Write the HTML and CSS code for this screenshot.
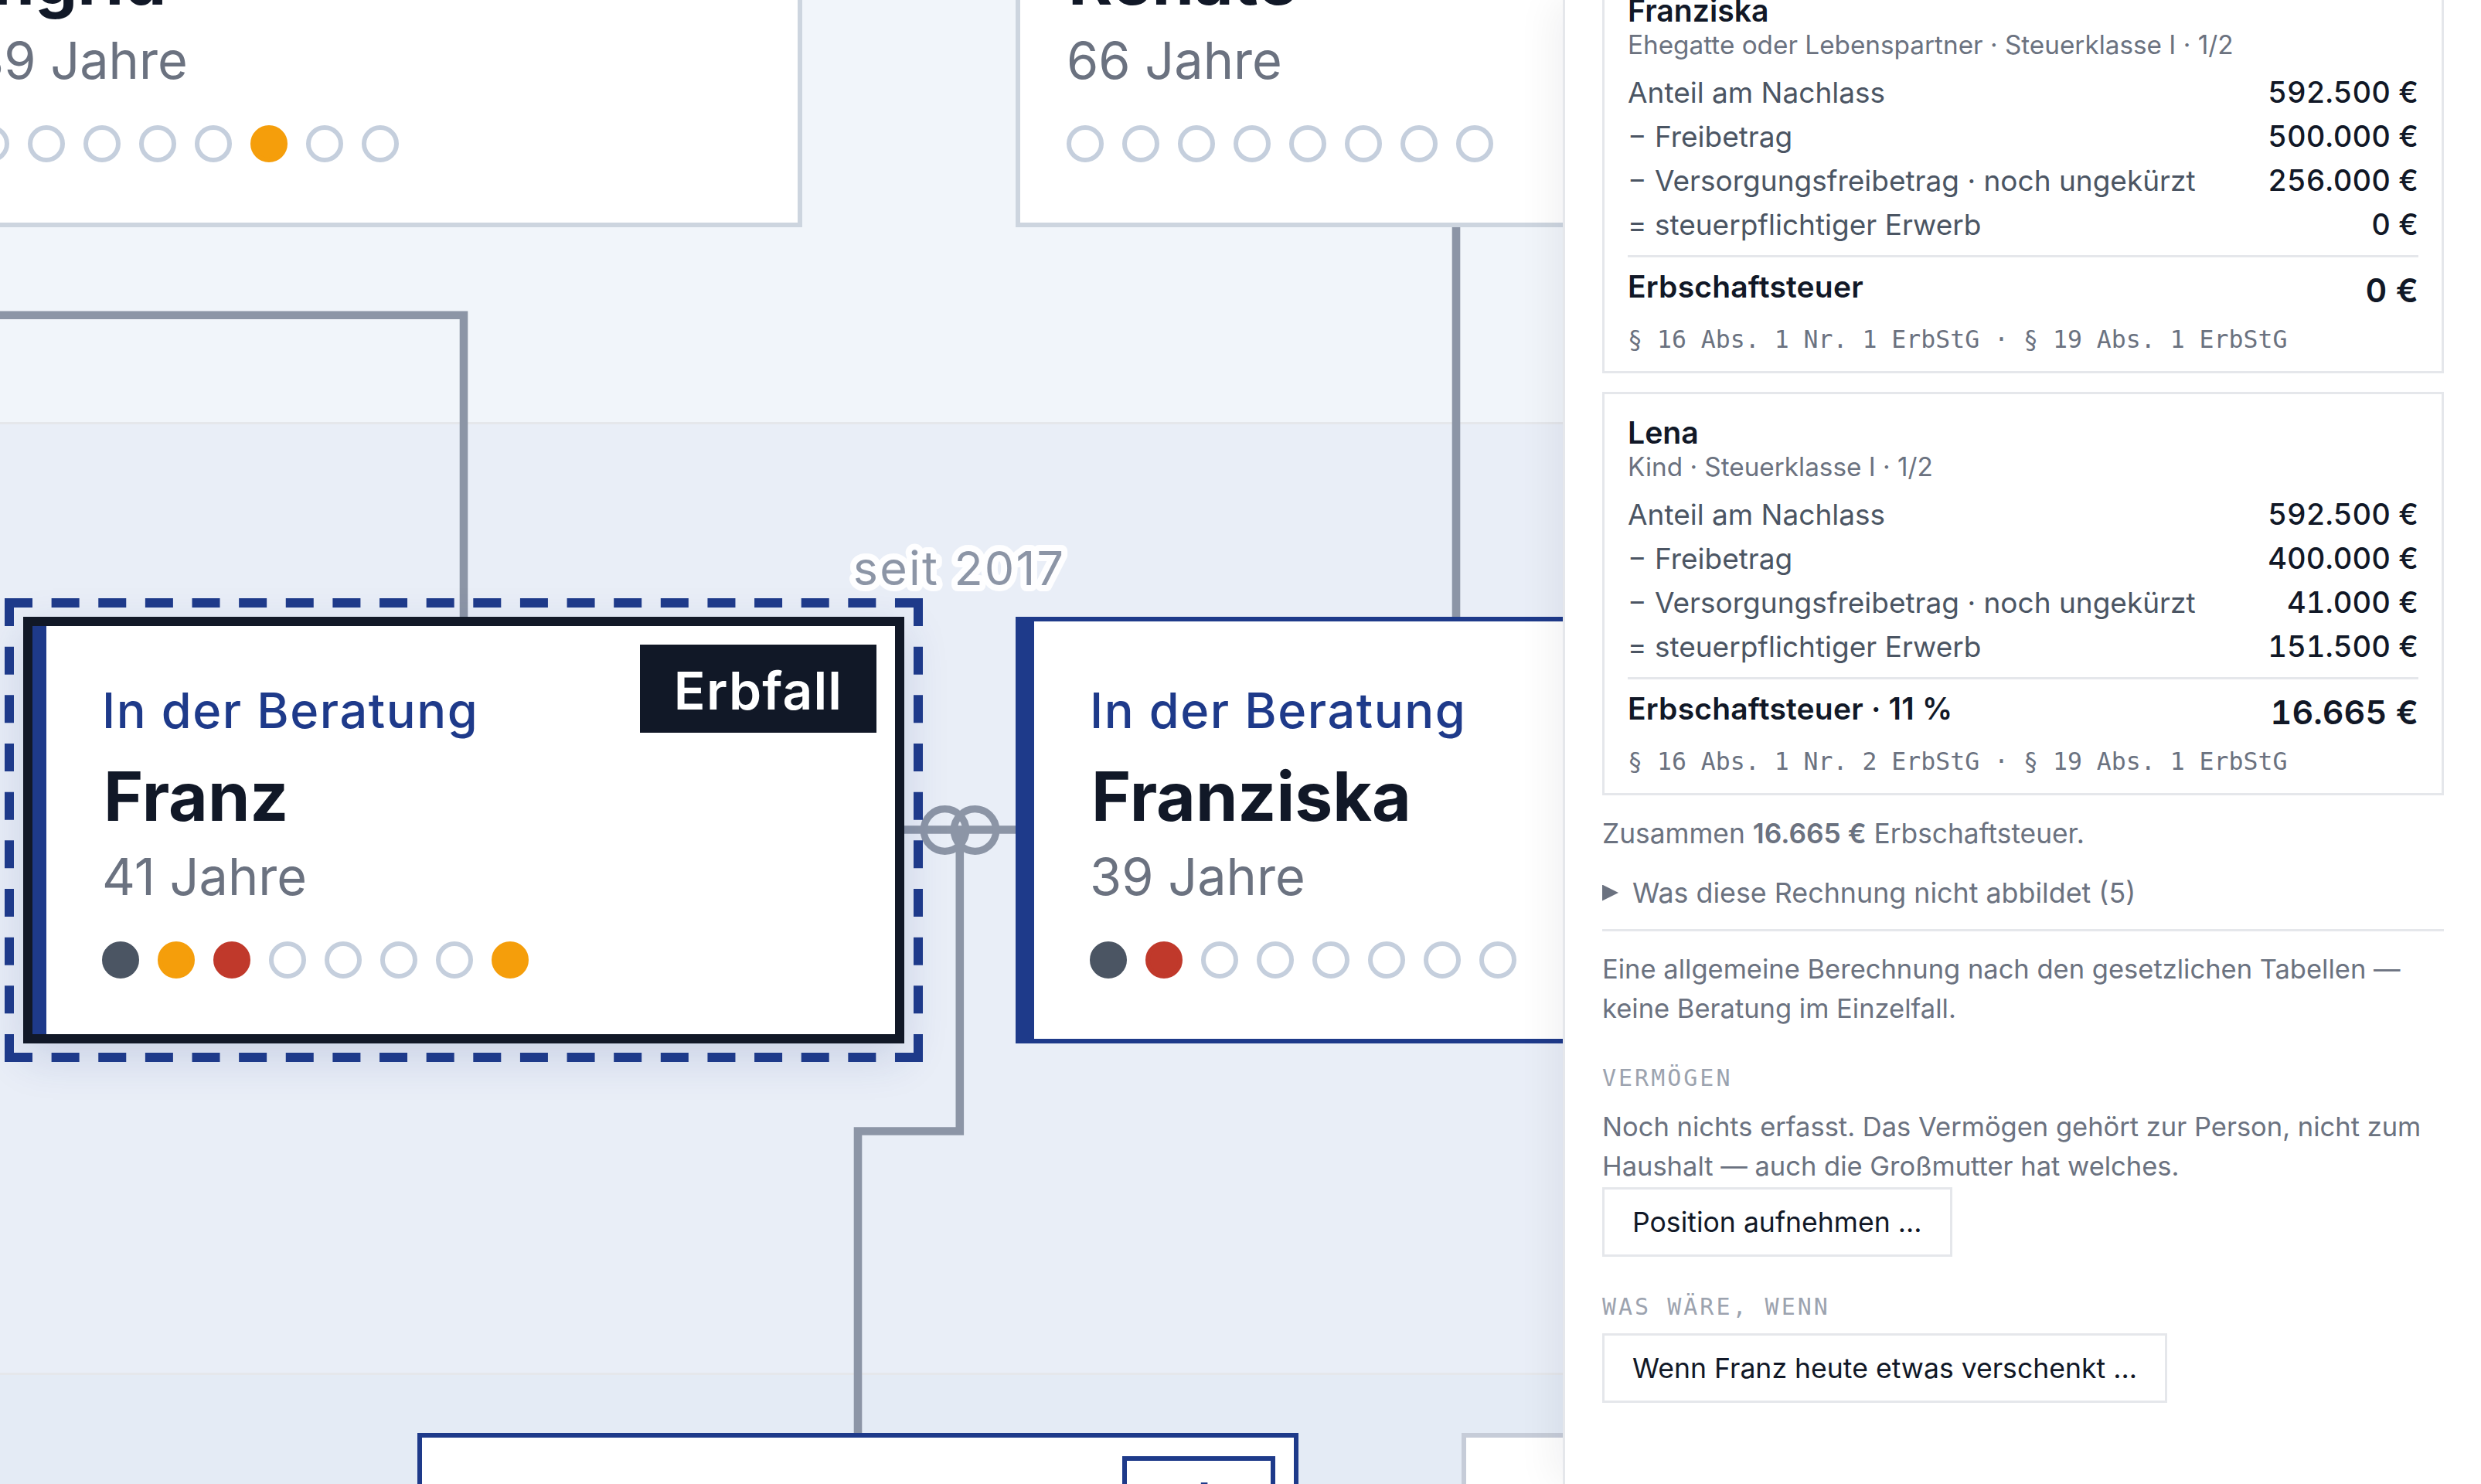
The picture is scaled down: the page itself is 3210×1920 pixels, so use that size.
FILE: index.html
```html
<!doctype html>
<html lang="de">
<head>
<meta charset="utf-8">
<title>Erbfall</title>
<link rel="stylesheet" href="styles.css">
</head>
<body>
<div class="app">
  <main class="canvas">
    <div class="band band--one"></div>
    <div class="band band--two"></div>
    <div class="band band--three"></div>

    <svg class="links" width="2022" height="1920" viewBox="0 0 2022 1920" aria-hidden="true">
      <path d="M-20 407.7H600V800"/>
      <path d="M1884 290V800"/>
      <path d="M1170 1073.5H1314"/>
      <circle class="ring" cx="1222.5" cy="1074" r="27.3"/>
      <circle class="ring" cx="1261.5" cy="1074" r="27.3"/>
      <path d="M1241.8 1074V1463.5H1110V1856"/>
    </svg>

    <article class="node node--ingrid">
      <div class="node__body">
        <div class="node__label"></div>
        <div class="node__name">Ingrid</div>
        <div class="node__age">39 Jahre</div>
        <div class="dots">
          <span class="dot"></span><span class="dot"></span><span class="dot"></span><span class="dot"></span><span class="dot"></span><span class="dot dot--amber"></span><span class="dot"></span><span class="dot"></span>
        </div>
      </div>
    </article>

    <article class="node node--renate">
      <div class="node__body">
        <div class="node__label"></div>
        <div class="node__name">Renate</div>
        <div class="node__age">66 Jahre</div>
        <div class="dots">
          <span class="dot"></span><span class="dot"></span><span class="dot"></span><span class="dot"></span><span class="dot"></span><span class="dot"></span><span class="dot"></span><span class="dot"></span>
        </div>
      </div>
    </article>

    <article class="node node--franz">
      <svg class="selection" width="1188" height="600" viewBox="0 0 1188 600" aria-hidden="true">
        <path class="selection__h" d="M0 6H1188M0 594H1188"/>
        <path class="selection__v" d="M6 0V600M1182 0V600"/>
      </svg>
      <span class="badge badge--dark">Erbfall</span>
      <div class="node__body">
        <div class="node__label">In der Beratung</div>
        <div class="node__name">Franz</div>
        <div class="node__age">41 Jahre</div>
        <div class="dots">
          <span class="dot dot--slate"></span><span class="dot dot--amber"></span><span class="dot dot--red"></span><span class="dot"></span><span class="dot"></span><span class="dot"></span><span class="dot"></span><span class="dot dot--amber"></span>
        </div>
      </div>
    </article>

    <article class="node node--franziska">
      <div class="node__body">
        <div class="node__label">In der Beratung</div>
        <div class="node__name">Franziska</div>
        <div class="node__age">39 Jahre</div>
        <div class="dots">
          <span class="dot dot--slate"></span><span class="dot dot--red"></span><span class="dot"></span><span class="dot"></span><span class="dot"></span><span class="dot"></span><span class="dot"></span><span class="dot"></span>
        </div>
      </div>
    </article>

    <article class="node node--child">
      <span class="badge badge--outline">ab</span>
    </article>
    <article class="node node--other"></article>

    <svg class="union-label" width="320" height="100" viewBox="0 0 320 100">
      <text x="161" y="66.7">seit 2017</text>
    </svg>
  </main>

  <aside class="panel">
    <section class="tax">
      <h3 class="tax__name">Franziska</h3>
      <p class="tax__meta">Ehegatte oder Lebenspartner · Steuerklasse I · 1/2</p>
      <div class="tax__rows">
        <div class="row"><span>Anteil am Nachlass</span><b>592.500 €</b></div>
        <div class="row"><span>− Freibetrag</span><b>500.000 €</b></div>
        <div class="row"><span>− Versorgungsfreibetrag · noch ungekürzt</span><b>256.000 €</b></div>
        <div class="row"><span>= steuerpflichtiger Erwerb</span><b>0 €</b></div>
      </div>
      <div class="total"><span>Erbschaftsteuer</span><b>0 €</b></div>
      <p class="tax__law">§ 16 Abs. 1 Nr. 1 ErbStG · § 19 Abs. 1 ErbStG</p>
    </section>

    <section class="tax tax--next">
      <h3 class="tax__name">Lena</h3>
      <p class="tax__meta">Kind · Steuerklasse I · 1/2</p>
      <div class="tax__rows">
        <div class="row"><span>Anteil am Nachlass</span><b>592.500 €</b></div>
        <div class="row"><span>− Freibetrag</span><b>400.000 €</b></div>
        <div class="row"><span>− Versorgungsfreibetrag · noch ungekürzt</span><b>41.000 €</b></div>
        <div class="row"><span>= steuerpflichtiger Erwerb</span><b>151.500 €</b></div>
      </div>
      <div class="total"><span>Erbschaftsteuer · 11 %</span><b>16.665 €</b></div>
      <p class="tax__law">§ 16 Abs. 1 Nr. 2 ErbStG · § 19 Abs. 1 ErbStG</p>
    </section>

    <p class="sum">Zusammen <strong>16.665 €</strong> Erbschaftsteuer.</p>
    <div class="more"><span class="more__arrow"></span>Was diese Rechnung nicht abbildet (5)</div>
    <hr class="rule">
    <p class="note">Eine allgemeine Berechnung nach den gesetzlichen Tabellen — keine Beratung im Einzelfall.</p>

    <h4 class="section-title">VERMÖGEN</h4>
    <p class="note note--tight">Noch nichts erfasst. Das Vermögen gehört zur Person, nicht zum Haushalt — auch die Großmutter hat welches.</p>
    <button class="action action--first" type="button">Position aufnehmen ...</button>

    <h4 class="section-title section-title--whatif">WAS WÄRE, WENN</h4>
    <button class="action" type="button">Wenn Franz heute etwas verschenkt ...</button>
  </aside>
</div>
</body>
</html>
```
FILE: styles.css
```css
* { box-sizing: border-box; }
html, body { margin: 0; padding: 0; }
body { font-family: Inter, "Noto Sans", sans-serif; color: #111827; background: #fff; }

.app { display: flex; width: 3210px; height: 1920px; overflow: hidden; }

/* canvas */
.canvas { position: relative; flex: 0 0 2022px; height: 1920px; overflow: hidden; background: #f1f5fa; }
.band { border-bottom: 3px solid #e5e7eb; }
.band--one { height: 549px; background: #f1f5fa; }
.band--two { height: 1230px; background: #e9eef7; }
.band--three { height: 141px; background: #e4ebf5; border-bottom: 0; }

.links { position: absolute; left: 0; top: 0; }
.links path { fill: none; stroke: #8c95a6; stroke-width: 10.6; }
.links .ring { fill: none; stroke: #8c95a6; stroke-width: 9.2; }

.node { position: absolute; width: 1140px; height: 552px; background: #fff; border: 6px solid #cdd5df; }
.node__body { height: 100%; padding: 79px 60px 0; display: flex; flex-direction: column; }
.node__label { height: 72px; font-size: 63px; line-height: 72px; font-weight: 500; letter-spacing: 1.6px; color: #1e3a8a; white-space: nowrap; }
.node__name { margin: 21px 0 0 2px; height: 108px; font-size: 87.5px; line-height: 108px; font-weight: 700; color: #111827; white-space: nowrap; }
.node__age { margin-top: 11px; height: 78px; font-size: 66.6px; line-height: 78px; color: #6b7280; white-space: nowrap; }
.dots { display: flex; gap: 24px; margin-top: 45px; }
.dot { flex: 0 0 48px; height: 48px; border: 6px solid #c5cfdd; border-radius: 50%; }
.dot--slate { background: #4b5563; border-color: #4b5563; }
.dot--amber { background: #f59e0b; border-color: #f59e0b; }
.dot--red { background: #c0392b; border-color: #c0392b; }

.node--ingrid { left: -102px; top: -258px; }
.node--renate { left: 1314px; top: -258px; }
.node--franz { left: 30px; top: 798px; border: 12px solid #111827; box-shadow: 0 18px 54px rgba(30, 58, 138, .16); }
.node--franz .node__body { border-left: 18px solid #1e3a8a; padding: 73px 60px 0 72px; }
.node--franziska { left: 1314px; top: 798px; border-color: #1e3a8a; border-left-width: 24px; }
.node--franziska .node__body { padding-left: 72px; }
.node--child { left: 540px; top: 1854px; border-color: #1e3a8a; }
.node--other { left: 1891px; top: 1854px; border-color: #c6ccd8; }

.badge { position: absolute; top: 24px; right: 24px; height: 114px; font-size: 67.5px; line-height: 120px; font-weight: 600; letter-spacing: 1.2px; text-align: center; white-space: nowrap; }
.badge--dark { width: 306px; background: #111827; color: #fff; }
.badge--outline { width: 198px; background: #fff; border: 6px solid #1e3a8a; color: #1e3a8a; line-height: 105px; }

.selection { position: absolute; left: -36px; top: -36px; overflow: visible; pointer-events: none; }
.selection path { fill: none; stroke: #1e3a8a; stroke-width: 12; }
.selection__h { stroke-dasharray: 36 24.63; }
.selection__v { stroke-dasharray: 36 26.67; }

.union-label { position: absolute; left: 1080px; top: 690px; overflow: visible; }
.union-label text { font-size: 61px; letter-spacing: 2.2px; fill: #8c95a6; stroke: rgba(255, 255, 255, .92); stroke-width: 16px; stroke-linejoin: round; paint-order: stroke fill; text-anchor: middle; }

/* panel */
.panel { position: relative; z-index: 2; flex: 1 1 auto; height: 1920px; overflow: hidden; padding: 0 48px; background: #fff; border-left: 3px solid #e5e7eb; box-shadow: -12px 0 48px rgba(17, 24, 39, .06); }

.tax { height: 522px; margin-top: -39px; padding: 27px 30px 0; border: 3px solid #e5e7eb; background: #fff; }
.tax--next { margin-top: 24px; }
.tax__name { margin: 0; height: 46px; font-size: 39.2px; line-height: 46px; font-weight: 600; color: #111827; }
.tax__meta { margin: 0; height: 42px; font-size: 33.3px; line-height: 42px; color: #6b7280; white-space: nowrap; }
.tax__rows { margin-top: 11.5px; padding-bottom: 10.7px; border-bottom: 3px solid #e5e7eb; }
.row { display: flex; justify-content: space-between; height: 57.2px; font-size: 37px; line-height: 57.2px; color: #4b5563; white-space: nowrap; }
.row b { font-size: 38.2px; font-weight: 500; color: #111827; font-variant-numeric: tabular-nums; }
.total { display: flex; justify-content: space-between; align-items: flex-start; margin-top: 10px; height: 65px; font-size: 39px; line-height: 56px; font-weight: 600; letter-spacing: .2px; color: #111827; }
.total b { font-size: 43px; line-height: 65px; font-weight: 600; letter-spacing: 0; font-variant-numeric: tabular-nums; }
.tax__law { margin: 10px 0 0; height: 42px; font-family: "DejaVu Sans Mono", monospace; font-size: 31.5px; line-height: 42px; color: #6b7280; white-space: nowrap; }

.sum { margin: 25px 0 0; font-size: 35.3px; line-height: 50px; color: #6b7280; }
.sum strong { font-weight: 600; color: #6b7280; }
.more { display: flex; align-items: center; gap: 18px; margin-top: 26px; height: 50px; font-size: 35.8px; line-height: 50px; color: #6b7280; }
.more__arrow { flex: 0 0 21px; height: 21px; background: #6b7280; clip-path: polygon(0 0, 100% 50%, 0 100%); }
.rule { margin: 22px 0 0; height: 3px; border: 0; background: #e5e7eb; }
.note { margin: 23px 0 0; font-size: 34.5px; line-height: 51px; color: #6b7280; }
.note--tight { margin-top: 16px; }
.section-title { margin: 44px 0 0; height: 42px; font-family: "DejaVu Sans Mono", monospace; font-size: 30px; line-height: 42px; font-weight: 400; letter-spacing: 3px; color: #9ca3af; }
.section-title--whatif { margin-top: 44px; }
.action { display: block; height: 90px; margin-top: 13px; padding: 0 36px; border: 3px solid #e5e7eb; border-radius: 0; background: #fff; font-family: Inter, "Noto Sans", sans-serif; font-size: 35.6px; color: #111827; white-space: nowrap; }
.action--first { margin-top: 2px; }
```
